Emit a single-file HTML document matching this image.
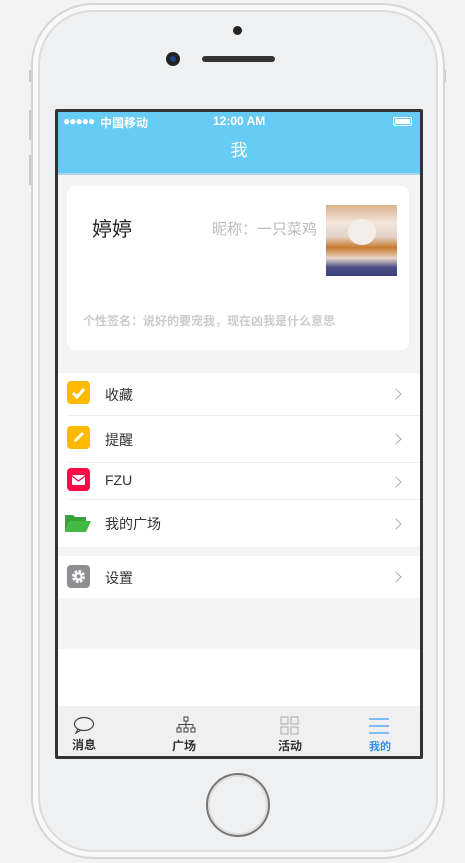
<!DOCTYPE html>
<html><head><meta charset="utf-8"><style>
*{margin:0;padding:0;box-sizing:border-box}
body{width:465px;height:863px;background:#f3f3f3;position:relative;overflow:hidden;font-family:"Liberation Sans","Noto Sans CJK SC",sans-serif}
.phone{position:absolute;left:31px;top:3px;width:414px;height:856px;border-radius:62px;background:#eef0f2;border:2px solid #d6d6d6;box-shadow:inset 0 0 0 5px #f9f9f9,inset 0 0 0 7px #dcdcdc}
.btn{position:absolute;background:#c9c9c9;width:3px}
.screen{position:absolute;left:55px;top:109px;width:368px;height:650px;background:#333;border-radius:2px}
.in{position:absolute;left:3px;top:3px;width:362px;height:644px;background:#f4f4f4;overflow:hidden}
.status{height:19px;background:#66ccf6;color:#fff;font-size:12px;font-weight:bold;position:relative}
.head{height:44px;background:#66ccf6;color:#fff;font-size:17px;text-align:center;line-height:40px;border-bottom:2px solid #a9d6ea}
.card{position:absolute;left:9px;top:74px;width:342px;height:164px;background:#fff;border-radius:8px}
.list{position:absolute;left:0;width:362px;background:#fff}
.row{position:absolute;left:0;width:362px;font-size:14px;color:#333}
.row .t{position:absolute;left:47px}
.chev{position:absolute;right:20px;width:8px;height:8px;border-right:1.5px solid #aaa;border-top:1.5px solid #aaa;transform:rotate(45deg)}
.sep{position:absolute;left:9px;right:0;height:1px;background:#eee}
.ic{position:absolute;left:9px;width:23px;height:23px;border-radius:4px}
.tab{position:absolute;top:594px;left:0;width:362px;height:50px;background:#f0f0f0}
.tab div{position:absolute;font-size:12px;font-weight:bold;color:#333;text-align:center;width:40px}
</style></head><body>
<div class="btn" style="left:29px;top:70px;height:12px"></div>
<div class="btn" style="left:29px;top:110px;height:30px"></div>
<div class="btn" style="left:29px;top:155px;height:30px"></div>
<div class="btn" style="left:443px;top:70px;height:12px"></div>
<div class="phone"></div>
<div style="position:absolute;left:233px;top:26px;width:9px;height:9px;border-radius:50%;background:#222"></div>
<div style="position:absolute;left:166px;top:52px;width:14px;height:14px;border-radius:50%;background:#222"><div style="margin:4px;width:6px;height:6px;border-radius:50%;background:#1c3f8a"></div></div>
<div style="position:absolute;left:202px;top:56px;width:73px;height:6px;border-radius:3px;background:#333"></div>
<div style="position:absolute;left:206px;top:773px;width:64px;height:64px;border-radius:50%;border:2px solid #777;background:#eef0f2;box-shadow:inset 0 0 0 2px #ddd"></div>
<div class="screen"><div class="in">
<div class="status"><span style="position:absolute;left:5px;top:2px;letter-spacing:-1px">●●●●●</span><span style="position:absolute;left:42px;top:2px">中国移动</span><span style="position:absolute;left:155px;top:2px">12:00 AM</span><span style="position:absolute;right:8px;top:5px;width:19px;height:9px;border:1px solid #fff;border-radius:2px;background:#fff;box-shadow:inset 0 0 0 1px #66ccf6"></span></div>
<div class="head">我</div>
<div class="card">
<div style="position:absolute;left:25px;top:27px;font-size:20px;color:#222">婷婷</div>
<div style="position:absolute;left:145px;top:32px;font-size:15px;color:#bbb">昵称：一只菜鸡</div>
<div style="position:absolute;left:259px;top:19px;width:71px;height:71px;background:linear-gradient(180deg,#d9b08a 0,#f3e6dd 25%,#e3d1c4 45%,#c87a2f 60%,#e6d6c8 75%,#4a4f86 88%,#3a3f78 100%)"><div style="position:absolute;left:22px;top:14px;width:28px;height:26px;border-radius:50%;background:#f4eee9"></div></div>
<div style="position:absolute;left:16px;top:126px;font-size:12px;color:#ccc;font-weight:bold">个性签名：说好的要宠我，现在凶我是什么意思</div>
</div>
<div class="list" style="top:261px;height:174px">
<div class="row" style="top:0;height:42px"><div class="ic" style="top:8px;background:#ffba00"><svg width="23" height="23"><path d="M6 12l4 4 7-8" stroke="#fff" stroke-width="3" fill="none"/></svg></div><span class="t" style="top:12px">收藏</span><i class="chev" style="top:17px"></i></div>
<div class="sep" style="top:42px"></div>
<div class="row" style="top:43px;height:46px"><div class="ic" style="top:10px;background:#ffba00"><svg width="23" height="23"><path d="M7 16l1-3 7-7 2 2-7 7z" fill="#fff"/></svg></div><span class="t" style="top:14px">提醒</span><i class="chev" style="top:19px"></i></div>
<div class="sep" style="top:89px"></div>
<div class="row" style="top:90px;height:36px"><div class="ic" style="top:5px;background:#ff0a47"><svg width="23" height="23"><rect x="5" y="7" width="13" height="10" rx="1" fill="#fff"/><path d="M5 8l6.5 5 6.5-5" stroke="#ff0a47" stroke-width="1.3" fill="none"/></svg></div><span class="t" style="top:9px">FZU</span><i class="chev" style="top:15px"></i></div>
<div class="sep" style="top:126px"></div>
<div class="row" style="top:127px;height:47px"><svg style="position:absolute;left:6px;top:12px" width="28" height="22"><path d="M1 3h8l2 2h11v4H6L1 20z" fill="#3aa23a"/><path d="M6 9h21l-5 11H1z" fill="#43b944"/></svg><span class="t" style="top:14px">我的广场</span><i class="chev" style="top:20px"></i></div>
</div>
<div class="list" style="top:444px;height:42px">
<div class="row" style="top:0;height:42px"><div class="ic" style="top:9px;background:#8e8e93"><svg width="23" height="23"><circle cx="11.5" cy="11.5" r="5" fill="none" stroke="#fff" stroke-width="3" stroke-dasharray="2.5 1.4"/><circle cx="11.5" cy="11.5" r="4" fill="#fff"/><circle cx="11.5" cy="11.5" r="2" fill="#8e8e93"/></svg></div><span class="t" style="top:12px">设置</span><i class="chev" style="top:17px"></i></div>
</div>
<div class="list" style="top:537px;height:57px"></div>
<div class="tab">
<svg style="position:absolute;left:15px;top:10px" width="22" height="18"><ellipse cx="11" cy="8" rx="9.5" ry="6.5" fill="none" stroke="#444" stroke-width="1.2"/><path d="M5 13l-2 4 5-3" fill="none" stroke="#444" stroke-width="1.2"/></svg>
<div style="left:6px;top:30px">消息</div>
<svg style="position:absolute;left:118px;top:10px" width="20" height="18"><rect x="8" y="1" width="4" height="4" fill="none" stroke="#444"/><rect x="1" y="12" width="4" height="4" fill="none" stroke="#444"/><rect x="8" y="12" width="4" height="4" fill="none" stroke="#444"/><rect x="15" y="12" width="4" height="4" fill="none" stroke="#444"/><path d="M10 5v7M3 12V8.5h14V12" fill="none" stroke="#444"/></svg>
<div style="left:106px;top:31px">广场</div>
<svg style="position:absolute;left:222px;top:10px" width="20" height="20"><rect x="1" y="1" width="7" height="7" fill="none" stroke="#aaa"/><rect x="11" y="1" width="7" height="7" fill="none" stroke="#aaa"/><rect x="1" y="11" width="7" height="7" fill="none" stroke="#aaa"/><rect x="11" y="11" width="7" height="7" fill="none" stroke="#aaa"/></svg>
<div style="left:212px;top:31px">活动</div>
<svg style="position:absolute;left:310px;top:12px" width="22" height="18"><path d="M1 1h20M1 8h20M1 15h20" stroke="#39a0f7" stroke-width="1.3"/></svg>
<div style="left:302px;top:32px;color:#3a8ef5;font-size:11px">我的</div>
</div>
</div></div>
</body></html>
